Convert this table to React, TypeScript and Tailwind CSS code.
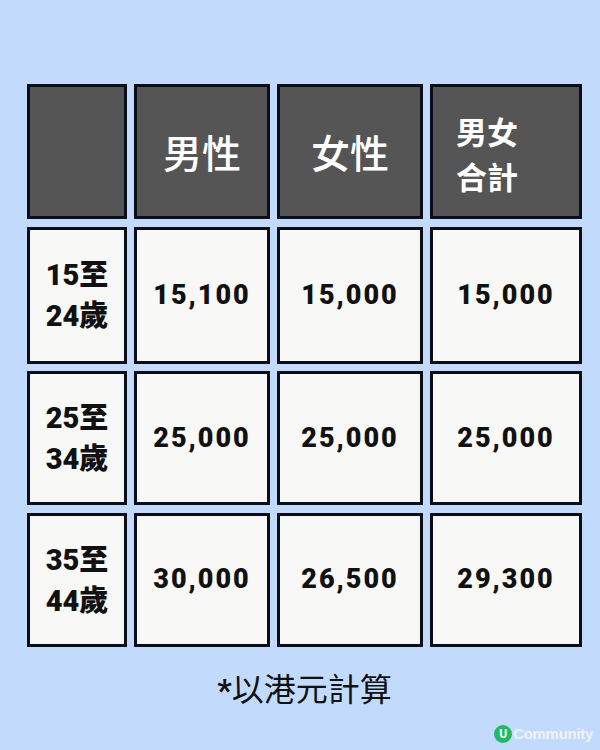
const rows = [
    { label: ['15至', '24歲'], values: ['15,100', '15,000', '15,000'] },
    { label: ['25至', '34歲'], values: ['25,000', '25,000', '25,000'] },
    { label: ['35至', '44歲'], values: ['30,000', '26,500', '29,300'] },
];

const font = { fontFamily: "Roboto, 'Noto Sans CJK TC', sans-serif" };

export default function App() {
    return (
        <div
            className="flex h-[750px] w-[600px] flex-col bg-[#c2dbfd] pt-[84px] pl-[27px]"
            style={font}
        >
            <div className="grid w-[555px] grid-cols-[100px_136px_146px_152px] grid-rows-[135px_137px_134px_134px] gap-x-[7px] gap-y-[7.5px]">
                {/* header */}
                <div className="border-[3px] border-[#0b0d18] bg-[#555555]" />
                <div className="flex items-center justify-center border-[3px] border-[#0b0d18] bg-[#555555] pt-[8px] text-[39px] font-medium text-white">
                    男性
                </div>
                <div className="flex items-center justify-center border-[3px] border-[#0b0d18] bg-[#555555] pt-[8px] text-[39px] font-medium text-white">
                    女性
                </div>
                <div className="flex flex-col justify-center border-[3px] border-[#0b0d18] bg-[#555555] pt-[8px] pl-[23px] text-[31px] leading-[45px] font-bold text-white">
                    <span>男女</span>
                    <span>合計</span>
                </div>

                {rows.map((row) => (
                    <>
                        <div
                            key={row.label[0]}
                            className="flex flex-col items-center justify-center border-[3px] border-[#0b0d18] bg-[#f8f8f6] pt-[2px] text-[29px] leading-[41px] font-black text-[#111111]"
                        >
                            <span>{row.label[0]}</span>
                            <span>{row.label[1]}</span>
                        </div>
                        {row.values.map((v, i) => (
                            <div
                                key={row.label[0] + i}
                                className="flex items-center justify-center border-[3px] border-[#0b0d18] bg-[#f8f8f6] text-[27px] font-black tracking-[2px] text-[#111111]"
                            >
                                {v}
                            </div>
                        ))}
                    </>
                ))}
            </div>

            {/* footnote */}
            <div className="mt-[22px] w-[555px] text-center text-[32px] leading-[42px] text-[#111111]">
                <span className="font-bold">*</span>以港元計算
            </div>

            {/* logo */}
            <div className="mt-[14px] flex w-[566px] items-center justify-end gap-[1px]">
                <div className="flex h-[18px] w-[18px] items-center justify-center rounded-full bg-[#1fba66] text-[12px] leading-none font-bold text-white">
                    U
                </div>
                <span
                    className="text-[15px] leading-none font-bold tracking-[-0.3px] text-[#eef3fb]"
                    style={{ fontFamily: "'Liberation Sans', sans-serif" }}
                >
                    Community
                </span>
            </div>
        </div>
    );
}
